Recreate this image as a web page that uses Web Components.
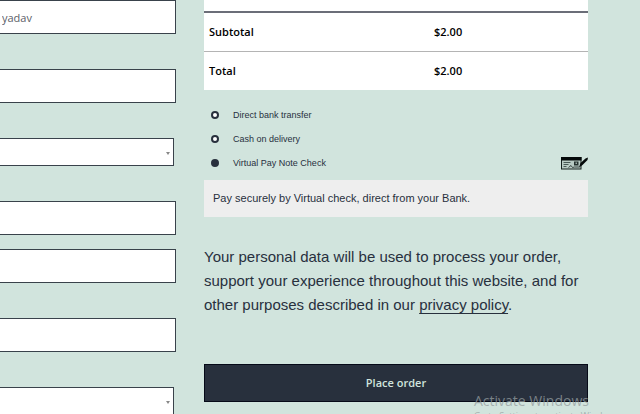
<!DOCTYPE html>
<html lang="en">
<head>
<meta charset="utf-8">
<meta name="viewport" content="width=device-width, initial-scale=1">
<title>Checkout</title>
<style>
    :root {
        --ink: #28303d;
        --page: #d1e4dd;
        --ui: "Open Sans", "Noto Sans", sans-serif;
        --text: "Liberation Sans", Arial, sans-serif;
    }
    body {
        margin: 0;
        height: 100vh;
        overflow: hidden;
        position: relative;
        background: var(--page);
        color: var(--ink);
        font-family: var(--text);
    }
</style>
</head>
<body>
<checkout-page>
    <billing-form slot="billing"></billing-form>
    <order-totals slot="order"></order-totals>
    <payment-methods slot="order">Pay securely by Virtual check, direct from your Bank.</payment-methods>
    <place-order slot="order">Place order</place-order>
</checkout-page>
<activation-notice></activation-notice>

<script>
// TWO COLUMN CHECKOUT LAYOUT
class CheckoutPage extends HTMLElement {
    constructor() {
        super();
        this.attachShadow({ mode: 'open' });
        this.shadowRoot.innerHTML = `
            <style>
                :host { display: block; }
                main {
                    display: grid;
                    grid-template-columns: 11fr 24fr;
                    gap: 28px;
                    padding-right: 52px;
                    align-items: start;
                }
            </style>
            <main>
                <section><slot name="billing"></slot></section>
                <section><slot name="order"></slot></section>
            </main>
        `;
    }
}

// ONE TEXT BOX OR DROP-DOWN OF THE BILLING FORM
class CheckoutField extends HTMLElement {
    constructor() {
        super();
        this.attachShadow({ mode: 'open' });
        this.shadowRoot.innerHTML = `
            <style>
                :host { display: block; }
                input, select {
                    display: block;
                    box-sizing: border-box;
                    width: 100%;
                    height: 34px;
                    margin: 0;
                    padding: 0 2px;
                    border: 1px solid #39424b;
                    border-left: 0;
                    border-radius: 0;
                    outline: 0;
                    background: #fff;
                    color: #5c6068;
                    font: 11px/16px var(--ui);
                }
                .select {
                    position: relative;
                    margin-right: 2px;
                }
                select {
                    height: 28px;
                    appearance: none;
                }
                .select::after {
                    content: "";
                    position: absolute;
                    right: 4px;
                    top: 14px;
                    border: 2px solid transparent;
                    border-top: 3px solid #888;
                    border-bottom: 0;
                    pointer-events: none;
                }
            </style>
        `;
    }

    connectedCallback() {
        const isSelect = this.getAttribute('type') === 'select';
        const control = document.createElement(isSelect ? 'select' : 'input');
        control.setAttribute('aria-label', this.getAttribute('label'));

        if (isSelect) {
            const wrapper = document.createElement('div');
            wrapper.className = 'select';
            wrapper.append(control);
            this.shadowRoot.append(wrapper);
        } else {
            control.type = 'text';
            control.value = this.getAttribute('value') || '';
            this.shadowRoot.append(control);
        }
    }
}

class BillingForm extends HTMLElement {
    constructor() {
        super();
        this.attachShadow({ mode: 'open' });
        this.shadowRoot.innerHTML = `
            <style>
                :host { display: block; }
                form, .address { display: flex; flex-direction: column; }
                form { gap: 35px; }
                .address { gap: 14px; }
            </style>
            <form>
                <checkout-field label="Last name" value="yadav"></checkout-field>
                <checkout-field label="Company name"></checkout-field>
                <checkout-field label="Country / Region" type="select"></checkout-field>
                <div class="address">
                    <checkout-field label="Street address"></checkout-field>
                    <checkout-field label="Apartment, suite, unit"></checkout-field>
                </div>
                <checkout-field label="Town / City"></checkout-field>
                <checkout-field label="State" type="select"></checkout-field>
            </form>
        `;
    }
}

// ORDER REVIEW TABLE
class OrderTotals extends HTMLElement {
    constructor() {
        super();
        this.attachShadow({ mode: 'open' });
        this.shadowRoot.innerHTML = `
            <style>
                :host {
                    display: block;
                    padding-top: 11px;
                    background: #fff;
                }
                table {
                    width: 100%;
                    table-layout: fixed;
                    border-collapse: collapse;
                    border-top: 2px solid #6b6e78;
                    color: #000;
                    font: 600 11px/16px var(--ui);
                }
                tr + tr { border-top: 1px solid #b4b4b4; }
                th, td {
                    padding: 11px 5px;
                    text-align: left;
                    font-weight: inherit;
                }
                th { width: 56%; }
            </style>
            <table>
                <tbody>
                    <tr><th scope="row">Subtotal</th><td>$2.00</td></tr>
                    <tr><th scope="row">Total</th><td>$2.00</td></tr>
                </tbody>
            </table>
        `;
    }
}

// PAYMENT OPTIONS, THE SLOT HOLDS THE DESCRIPTION OF THE CHOSEN ONE
class PaymentMethods extends HTMLElement {
    constructor() {
        super();
        this.attachShadow({ mode: 'open' });
        this.shadowRoot.innerHTML = `
            <style>
                :host { display: block; padding-top: 13px; }
                ul { margin: 0; padding: 0; list-style: none; }
                li {
                    display: flex;
                    align-items: center;
                    height: 24px;
                    padding-left: 7px;
                    font-size: 9px;
                }
                label { flex: 1; padding-left: 14px; }
                input {
                    appearance: none;
                    box-sizing: border-box;
                    width: 8px;
                    height: 8px;
                    margin: 0;
                    border: 2px solid var(--ink);
                    border-radius: 50%;
                    background: #fff;
                }
                input:checked { background: var(--ink); }
                svg { display: block; }
                p {
                    margin: 5px 0 0;
                    padding: 10px 9px;
                    background: #eee;
                    font-size: 11px;
                    line-height: 17px;
                }
            </style>
            <ul>
                <li>
                    <input type="radio" name="payment" id="bacs">
                    <label for="bacs">Direct bank transfer</label>
                </li>
                <li>
                    <input type="radio" name="payment" id="cod">
                    <label for="cod">Cash on delivery</label>
                </li>
                <li>
                    <input type="radio" name="payment" id="vpn" checked>
                    <label for="vpn">Virtual Pay Note Check</label>
                    <svg width="28" height="14" viewBox="0 0 28 14" aria-hidden="true">
                        <rect x="1.5" y="1.5" width="19.5" height="11.5" fill="#b9cbc4" stroke="#16211f"/>
                        <path d="M1 1h20.500v3.500H1z" fill="#050a0a"/>
                        <path d="M3.500 6.500h7M3.500 8.500h5M3.500 10.500h3" stroke="#4a5a56"/>
                        <rect x="14" y="5.500" width="4.500" height="4" fill="#26322f"/>
                        <path d="M15.500 6.500h1.500v1.500h-1.500z" fill="#9aaba5"/>
                        <path d="M8.500 11.500l2.500-2 1.500 2 2-.5 5 0" fill="none" stroke="#2a3633" stroke-width=".9"/>
                        <path d="M19 11.500l1.500-4.500 5-4.500 2.500-1-.500 2.500-5 5z" fill="#050a0a"/>
                    </svg>
                </li>
            </ul>
            <p><slot></slot></p>
        `;
    }
}

class PlaceOrder extends HTMLElement {
    constructor() {
        super();
        this.attachShadow({ mode: 'open' });
        this.shadowRoot.innerHTML = `
            <style>
                :host { display: block; }
                p {
                    margin: 28px 0 47px;
                    font-size: 15px;
                    line-height: 24px;
                }
                a {
                    color: inherit;
                    text-decoration-thickness: 1px;
                    text-decoration-skip-ink: none;
                    text-underline-offset: 3px;
                }
                button {
                    display: block;
                    box-sizing: border-box;
                    width: 100%;
                    padding: 10px;
                    border: 1px solid #060a18;
                    border-radius: 0;
                    background: var(--ink);
                    color: var(--page);
                    font: 600 11px/16px var(--ui);
                }
            </style>
            <p>Your personal data will be used to process your order, support your experience throughout this website, and for other purposes described in our <a href="#privacy">privacy policy</a>.</p>
            <button type="button"><slot></slot></button>
        `;
    }
}

// SYSTEM NOTICE FLOATING OVER THE LOWER RIGHT CORNER
class ActivationNotice extends HTMLElement {
    constructor() {
        super();
        this.attachShadow({ mode: 'open' });
        this.shadowRoot.innerHTML = `
            <style>
                :host {
                    display: block;
                    position: absolute;
                    top: 391px;
                    left: 474px;
                    color: rgba(150, 158, 160, .75);
                    font-family: var(--ui);
                    white-space: nowrap;
                    pointer-events: none;
                }
                div { font-size: 14px; line-height: 19px; }
                small { display: block; font-size: 9px; line-height: 12px; }
            </style>
            <div>Activate Windows</div>
            <small>Go to Settings to activate Windows.</small>
        `;
    }
}

// REGISTER CUSTOM ELEMENTS
customElements.define('checkout-page', CheckoutPage);
customElements.define('checkout-field', CheckoutField);
customElements.define('billing-form', BillingForm);
customElements.define('order-totals', OrderTotals);
customElements.define('payment-methods', PaymentMethods);
customElements.define('place-order', PlaceOrder);
customElements.define('activation-notice', ActivationNotice);
</script>
</body>
</html>
